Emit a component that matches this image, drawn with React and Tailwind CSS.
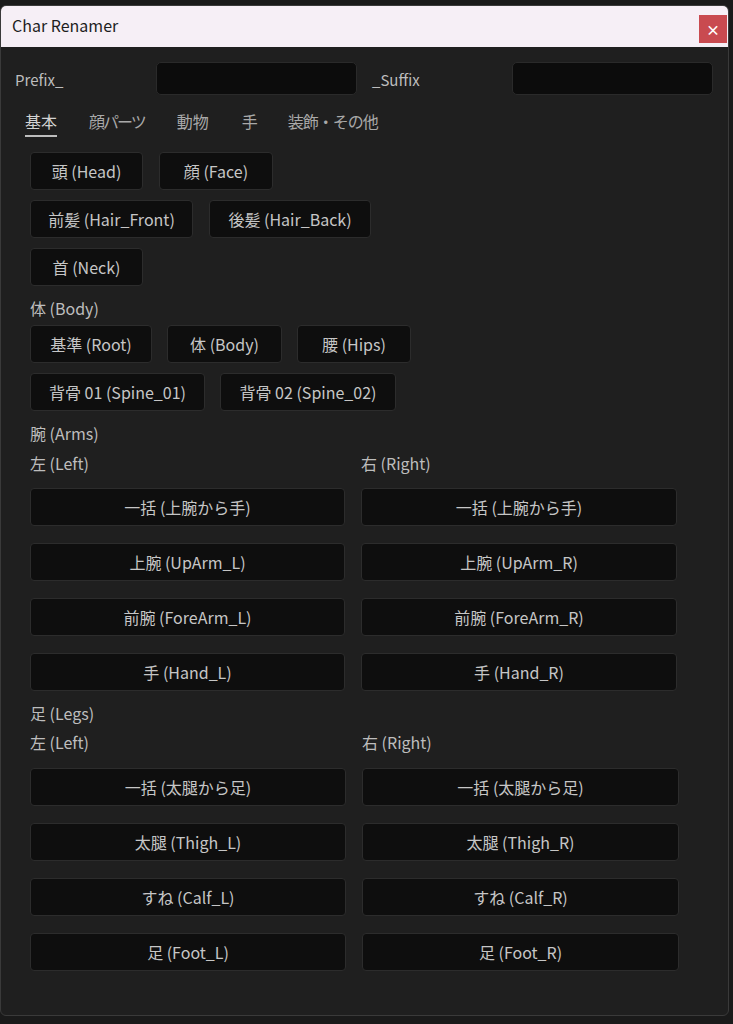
import React from 'react';

const FONT = { fontFamily: '"Noto Sans CJK JP", "Noto Sans", sans-serif' };

const basicRows = [
  [['頭 (Head)', 'w-[113px]'], ['顔 (Face)', 'w-[114px]']],
  [['前髪 (Hair_Front)', 'w-[163px]'], ['後髪 (Hair_Back)', 'w-[162px]']],
  [['首 (Neck)', 'w-[113px]']],
];

const bodyRows = [
  [['基準 (Root)', 'w-[122px]'], ['体 (Body)', 'w-[115px]'], ['腰 (Hips)', 'w-[114px]']],
  [['背骨 01 (Spine_01)', 'w-[175px]'], ['背骨 02 (Spine_02)', 'w-[176px]']],
];

const arms = [
  ['一括 (上腕から手)', '一括 (上腕から手)'],
  ['上腕 (UpArm_L)', '上腕 (UpArm_R)'],
  ['前腕 (ForeArm_L)', '前腕 (ForeArm_R)'],
  ['手 (Hand_L)', '手 (Hand_R)'],
];

const legs = [
  ['一括 (太腿から足)', '一括 (太腿から足)'],
  ['太腿 (Thigh_L)', '太腿 (Thigh_R)'],
  ['すね (Calf_L)', 'すね (Calf_R)'],
  ['足 (Foot_L)', '足 (Foot_R)'],
];

// tab label + left margin so they sit where the reference has them
const tabs = [
  ['基本', 'ml-0'],
  ['顔パーツ', 'ml-[32px] tracking-[-2px]'],
  ['動物', 'ml-[32px]'],
  ['手', 'ml-[33px]'],
  ['装飾・その他', 'ml-[30px] tracking-[-1px]'],
];

function Btn({ children, className = '' }) {
  return (
    <button className={`h-[38px] rounded-[4px] border border-[#2c2c2c] bg-[#0e0e0e] text-[16px] text-[#c6c6c6] flex items-center justify-center ${className}`}>
      {children}
    </button>
  );
}

function Label({ children, className = '' }) {
  return <div className={`h-[22px] leading-[22px] text-[16px] text-[#bdbdbd] ${className}`}>{children}</div>;
}

export default function App() {
  return (
    <div className="w-[733px] h-[1024px] bg-[#1a1a1a] pt-[5px] overflow-hidden" style={FONT}>
      <div className="w-[729px] h-[1011px] rounded-[6px] border border-[#3a3a3a] bg-[#1f1f1f] overflow-hidden">
        {/* title bar */}
        <div className="h-[41px] bg-[#f6eff6] flex items-start justify-between pl-[11px] pr-[1px]">
          <span className="h-[38px] leading-[38px] text-[16px] text-[#1e1e1e]">Char Renamer</span>
          <div className="w-[28px] h-[28px] mt-[9px] bg-[#c94a50] text-white text-[14px] font-bold flex items-center justify-center">
            ×
          </div>
        </div>

        {/* prefix / suffix */}
        <div className="flex items-center px-[14px] mt-[15px]">
          <span className="w-[141px] text-[15px] leading-[22px] mt-[2px] text-[#bdbdbd]">Prefix_</span>
          <div className="w-[201px] h-[33px] rounded-[5px] border border-[#2a2a2a] bg-[#0c0c0c]" />
          <span className="ml-[15px] w-[140px] text-[15px] leading-[22px] mt-[2px] text-[#bdbdbd]">_Suffix</span>
          <div className="w-[201px] h-[33px] rounded-[5px] border border-[#2a2a2a] bg-[#0c0c0c]" />
        </div>

        {/* tabs */}
        <div className="flex pl-[24px] mt-[14px]">
          {tabs.map(([t, m], i) => (
            <div key={t} className={`flex flex-col items-stretch ${m}`}>
              <span className={`text-[16px] leading-[24px] ${i === 0 ? 'text-[#d2d2d2]' : 'text-[#a9a9a9]'}`}>{t}</span>
              <div className={`h-[2px] mt-[2px] ${i === 0 ? 'bg-[#bdbdbd]' : 'bg-transparent'}`} />
            </div>
          ))}
        </div>

        <div className="pl-[29px] mt-[15px]">
          {/* basic */}
          <div className="flex flex-col gap-[10px]">
            {basicRows.map((row, i) => (
              <div key={i} className="flex gap-[16px]">
                {row.map(([t, w]) => (
                  <Btn key={t} className={w}>{t}</Btn>
                ))}
              </div>
            ))}
          </div>

          <Label className="mt-[11px]">体 (Body)</Label>
          <div className="flex flex-col gap-[10px] mt-[6px]">
            {bodyRows.map((row, i) => (
              <div key={i} className="flex gap-[15px]">
                {row.map(([t, w]) => (
                  <Btn key={t} className={w}>{t}</Btn>
                ))}
              </div>
            ))}
          </div>

          {/* arms */}
          <Label className="mt-[11px]">腕 (Arms)</Label>
          <div className="grid grid-cols-[315px_316px] gap-x-[16px] mt-[8px]">
            <Label>左 (Left)</Label>
            <Label>右 (Right)</Label>
          </div>
          <div className="grid grid-cols-[315px_316px] gap-x-[16px] gap-y-[17px] mt-[14px]">
            {arms.map(([l, r]) => (
              <React.Fragment key={l + r}>
                <Btn>{l}</Btn>
                <Btn>{r}</Btn>
              </React.Fragment>
            ))}
          </div>

          {/* legs */}
          <Label className="mt-[11px]">足 (Legs)</Label>
          <div className="grid grid-cols-[316px_317px] gap-x-[16px] mt-[7px]">
            <Label>左 (Left)</Label>
            <Label>右 (Right)</Label>
          </div>
          <div className="grid grid-cols-[316px_317px] gap-x-[16px] gap-y-[17px] mt-[15px]">
            {legs.map(([l, r]) => (
              <React.Fragment key={l + r}>
                <Btn>{l}</Btn>
                <Btn>{r}</Btn>
              </React.Fragment>
            ))}
          </div>
        </div>
      </div>
    </div>
  );
}
